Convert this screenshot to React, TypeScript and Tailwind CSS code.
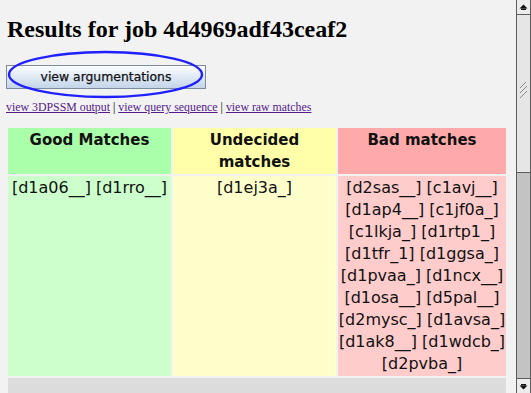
import React from 'react';

const bad = [
  'd2sas__', 'c1avj__', 'd1ap4__', 'c1jf0a_', 'c1lkja_', 'd1rtp1_', 'd1tfr_1', 'd1ggsa_',
  'd1pvaa_', 'd1ncx__', 'd1osa__', 'd5pal__', 'd2mysc_', 'd1avsa_', 'd1ak8__', 'd1wdcb_', 'd2pvba_',
];

const sans = { fontFamily: '"DejaVu Sans", Verdana, sans-serif' };

const Scrollbar: React.FC = () => (
  <div className="w-[15px] h-full flex flex-col border-l border-r border-[#5c5c5c] bg-[#c3c3c3]">
    <div className="h-[15px] flex items-center justify-center bg-[#ececec] border-b border-[#5c5c5c]">
      <svg width="9" height="7" viewBox="0 0 9 7">
        <path d="M4.5 0.5 L8.5 4.5 L0.5 4.5 Z" fill="#111" />
        <rect x="2" y="4.5" width="5" height="1.5" fill="#111" />
      </svg>
    </div>
    <div className="h-[158px] bg-[#e6e6e6] border-b border-[#5c5c5c] flex items-center justify-center">
      <svg width="9" height="17" viewBox="0 0 9 17" className="mt-[-6px]">
        <path d="M1 6 L7 0 M1 11 L8 4 M1 16 L8 9" stroke="#8a8a8a" strokeWidth="1" />
      </svg>
    </div>
    <div className="flex-1" />
    <div className="h-[15px] flex items-center justify-center bg-[#ececec] border-t border-[#5c5c5c]">
      <svg width="9" height="7" viewBox="0 0 9 7">
        <rect x="2" y="1" width="5" height="1.5" fill="#111" />
        <path d="M0.5 2.5 L8.5 2.5 L4.5 6.5 Z" fill="#111" />
      </svg>
    </div>
  </div>
);

export default function App() {
  return (
    <div className="w-[531px] h-[393px] overflow-hidden bg-[#f2f2f2] flex">
      <div className="w-[516px] flex flex-col">
        <h1
          className="mt-4 ml-[7px] text-[24px] leading-[27px] font-bold text-black"
          style={{ fontFamily: '"Liberation Serif", "Times New Roman", serif' }}
        >
          Results for job 4d4969adf43ceaf2
        </h1>

        <div className="relative mt-5 ml-[6px] w-[200px] h-[24px]">
          <button
            className="w-full h-full border border-[#7d8c9c] bg-gradient-to-b from-[#fbfdff] to-[#c4d5e9] text-[12.4px] text-[#111] [-webkit-text-stroke:0.25px_#111]"
            style={sans}
          >
            view argumentations
          </button>
          <svg
            className="absolute left-0 top-[-12px] overflow-visible pointer-events-none"
            width="200"
            height="48"
            viewBox="0 0 200 48"
          >
            <ellipse cx="99.5" cy="23.5" rx="96.5" ry="22.5" fill="none" stroke="#1f1fff" strokeWidth="2.4" />
          </svg>
        </div>

        <div
          className="mt-[13px] ml-[6px] text-[11.85px] leading-[14px] text-black"
          style={{ fontFamily: '"Liberation Serif", "Times New Roman", serif' }}
        >
          <a href="#" className="text-[#551a8b] underline">view 3DPSSM output</a>
          {' | '}
          <a href="#" className="text-[#551a8b] underline">view query sequence</a>
          {' | '}
          <a href="#" className="text-[#551a8b] underline">view raw matches</a>
        </div>

        <div
          className="mt-[14px] ml-[8px] grid grid-cols-[163px_163px_168px] gap-x-[2px] gap-y-[2px] text-[#111]"
          style={sans}
        >
          <div className="h-[46px] bg-[#aaffaa] text-center font-bold text-[15px] leading-[22px] pt-[1px]">
            Good Matches
          </div>
          <div className="h-[46px] bg-[#ffffaa] text-center font-bold text-[15px] leading-[22px] pt-[1px]">
            Undecided<br />matches
          </div>
          <div className="h-[46px] bg-[#ffaaaa] text-center font-bold text-[15px] leading-[22px] pt-[1px]">
            Bad matches
          </div>

          <div className="bg-[#ccffcc] text-center text-[16px] leading-[22px] py-[1px]">
            [d1a06__] [d1rro__]
          </div>
          <div className="bg-[#ffffcc] text-center text-[16px] leading-[22px] py-[1px]">
            [d1ej3a_]
          </div>
          <div className="bg-[#ffcccc] text-center text-[16px] leading-[22px] py-[1px]">
            {bad.map((b) => `[${b}]`).join(' ')}
          </div>

          <div className="col-span-3 h-[20px] bg-[#dcdcdc]" />
        </div>
      </div>
      <Scrollbar />
    </div>
  );
}
